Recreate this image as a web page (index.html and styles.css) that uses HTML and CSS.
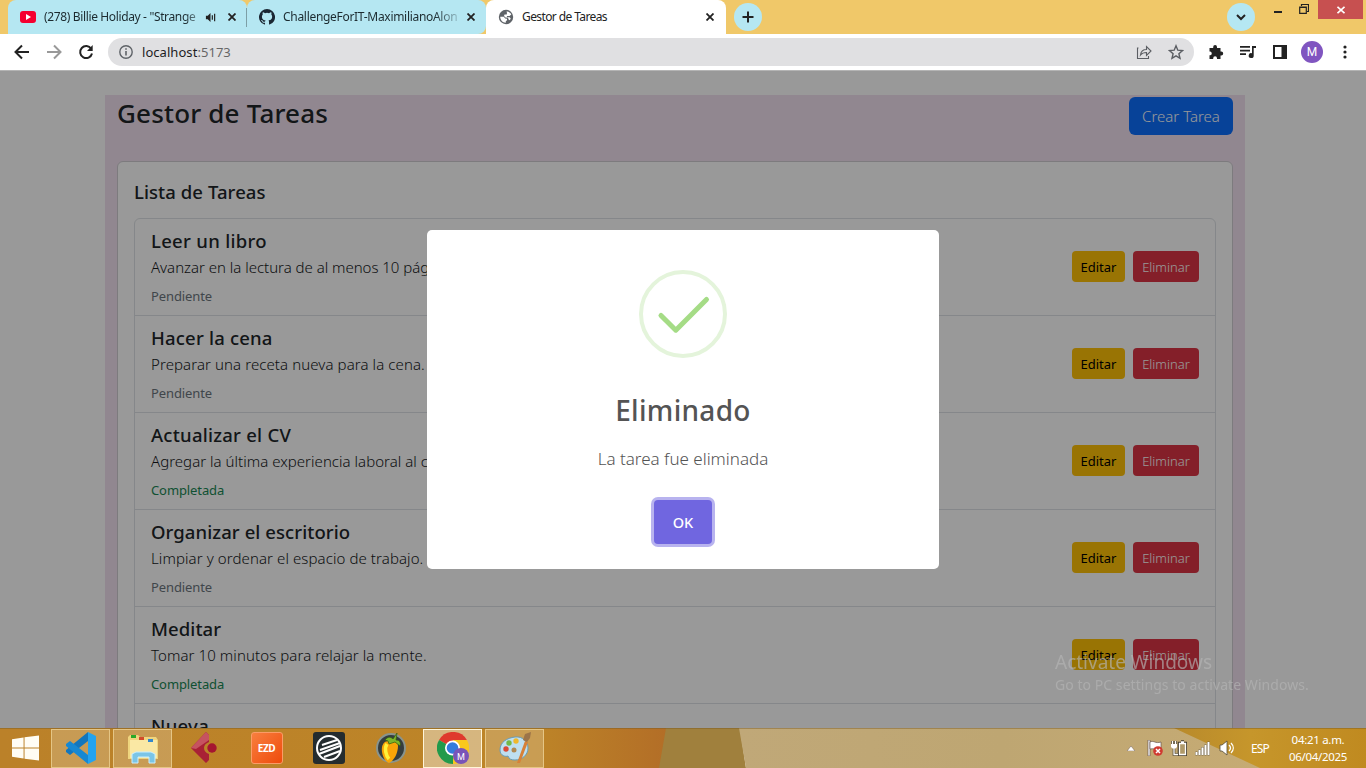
FILE: index.html
```html
<!DOCTYPE html>
<html lang="es">
<head>
<meta charset="utf-8">
<title>Gestor de Tareas</title>
<link rel="stylesheet" href="styles.css">
</head>
<body>
<div class="desktop">
  <header class="tabstrip">
    <div class="tabs">
      <div class="tab tab-first">
        <svg class="fav" viewBox="0 0 16 16"><rect y="2" width="16" height="12" rx="3" fill="#f5002f"/><path d="M6 5l5 3-5 3z" fill="#fff"/></svg>
        <span class="tab-title t1">(278) Billie Holiday - "Strange</span>
        <svg class="audio" viewBox="0 0 12 12"><path d="M1 4h2l3-3v10L3 8H1z" fill="#222"/><path d="M8 3.500v5M10.500 2v8" stroke="#222" stroke-width="1.300"/></svg>
        <svg class="x" viewBox="0 0 8 8"><path d="M.5.5l7 7m0-7l-7 7"/></svg>
      </div>
      <div class="tab tab-second">
        <svg class="fav" viewBox="0 0 16 16"><path fill="#1b2733" d="M8 0a8 8 0 0 0-2.530 15.590c.4.070.55-.17.55-.38v-1.490c-2.010.37-2.530-.49-2.690-.94-.09-.23-.48-.94-.82-1.130-.28-.15-.68-.52-.01-.53.63-.01 1.080.58 1.230.82.72 1.210 1.870.87 2.330.66.07-.52.28-.87.51-1.070-1.780-.2-3.640-.89-3.640-3.950 0-.87.31-1.590.82-2.150-.08-.2-.36-1.020.08-2.120 0 0 .67-.21 2.200.82a7.400 7.400 0 0 1 4 0c1.530-1.040 2.200-.82 2.200-.82.44 1.100.16 1.920.08 2.120.51.56.82 1.270.82 2.150 0 3.070-1.870 3.750-3.650 3.950.29.25.54.73.54 1.480v2.200c0 .21.15.46.55.38A8 8 0 0 0 8 0z"/></svg>
        <span class="tab-title t2">ChallengeForIT-MaximilianoAlon</span>
        <svg class="x" viewBox="0 0 8 8"><path d="M.5.5l7 7m0-7l-7 7"/></svg>
      </div>
      <div class="tab tab-active">
        <svg class="fav" viewBox="0 0 16 16"><circle cx="8" cy="8" r="7.200" fill="#5f6368"/><path d="M2.200 7.800h3.600l1.400 1.700 1.800.3v1.400l-1.200 1v1.500C4.500 13.700 2.300 11 2.200 7.800zM8.500 2.500c2 0 4 1.200 4.800 3L11.500 7H8.800l.4 1.200h2.300l1.200 1-.8 2-1.300-.8-.6-1.600-2.500-.4L6 7l.5-1.500h2.200L9 4z" fill="#fff"/></svg>
        <span class="tab-title t3">Gestor de Tareas</span>
        <svg class="x" viewBox="0 0 8 8"><path d="M.5.5l7 7m0-7l-7 7"/></svg>
      </div>
      <div class="round new-tab"><svg viewBox="0 0 12 12"><path d="M6 .5v11M.5 6h11"/></svg></div>
    </div>
    <div class="round tab-search"><svg viewBox="0 0 12 12"><path d="M2 4l4 4 4-4"/></svg></div>
    <svg class="min" viewBox="0 0 8 2"><path d="M0 0h8v2H0z" fill="#222"/></svg>
    <svg class="restore" viewBox="0 0 10 10"><path d="M.7 3h6.600v6.300H.7zM.2 3.300h7.600M2.500 2V.5h7v7H8" fill="none" stroke="#222" stroke-width="1.200"/></svg>
    <div class="win-close"><svg viewBox="0 0 8 8"><path d="M.5.8l7 6.400m0-6.400l-7 6.400" stroke="#fff" stroke-width="1.700"/></svg></div>
  </header>

  <div class="toolbar">
    <svg class="nav back" viewBox="0 0 16 16"><path d="M15 8H2M8 1.500L1.500 8 8 14.500"/></svg>
    <svg class="nav fwd" viewBox="0 0 16 16"><path d="M1 8h13M8 1.500L14.500 8 8 14.500"/></svg>
    <svg class="nav reload" viewBox="0 0 16 16"><path d="M13.200 4.800A6 6 0 1 0 14 9.500"/><path d="M14.700 1v6H9z" class="solid"/></svg>
    <div class="omnibox">
      <svg class="info" viewBox="0 0 14 14"><circle cx="7" cy="7" r="6.200" fill="none" stroke="#5f6368" stroke-width="1.400"/><path d="M6.200 6h1.600v4.500H6.200zM6.200 3.300h1.600v1.500H6.200z" fill="#5f6368"/></svg>
      <span class="url">localhost<span class="port">:5173</span></span>
      <svg class="share" viewBox="0 0 16 16"><path d="M2.500 4H1.500v10.500h11V12M4.500 11c.5-4 3-5.500 6-5.500V2.500L15 7l-4.500 4.500v-3c-3 0-4.500.5-6 2.500z"/></svg>
      <svg class="star" viewBox="0 0 16 16"><path d="M8 1.800l1.800 4.400 4.700.4-3.600 3.100 1.100 4.600L8 11.800l-4 2.500 1.100-4.600L1.500 6.600l4.700-.4z"/></svg>
    </div>
    <svg class="tool" viewBox="0 0 16 16"><path d="M1.500 4h3.700V3a1.900 1.900 0 0 1 3.800 0v1h3.500v3.600h.8a1.900 1.900 0 0 1 0 3.800h-.8V15H9v-.8a1.900 1.900 0 0 0-3.800 0v.8H1.500v-3.700h.8a1.900 1.900 0 0 0 0-3.700h-.8z"/></svg>
    <svg class="tool" viewBox="0 0 16 16"><path d="M0 2h10v1.700H0zM0 5.700h10v1.700H0zM0 9.300h6V11H0zM12 2h4v2h-2.300v7.500a2.500 2.500 0 1 1-1.700-2.300z"/></svg>
    <svg class="tool" viewBox="0 0 16 16"><path d="M1 1h14v14H1zM3 3v10h6.500V3z" fill-rule="evenodd"/></svg>
    <div class="avatar">M</div>
    <svg class="tool dots" viewBox="0 0 16 16"><circle cx="8" cy="3" r="1.600"/><circle cx="8" cy="8" r="1.600"/><circle cx="8" cy="13" r="1.600"/></svg>
  </div>

  <main class="viewport">
    <div class="container">
      <div class="page-head">
        <h2 class="page-title">Gestor de Tareas</h2>
        <button class="btn btn-primary">Crear Tarea</button>
      </div>
      <section class="card">
        <h5 class="card-title">Lista de Tareas</h5>
        <ul class="list">
          <li class="item"><div><h5 class="name n1">Leer un libro</h5><p class="desc d1">Avanzar en la lectura de al menos 10 páginas.</p><small class="state">Pendiente</small></div><div class="acts"><button class="btn sm warn">Editar</button><button class="btn sm danger">Eliminar</button></div></li>
          <li class="item"><div><h5 class="name n2">Hacer la cena</h5><p class="desc">Preparar una receta nueva para la cena.</p><small class="state">Pendiente</small></div><div class="acts"><button class="btn sm warn">Editar</button><button class="btn sm danger">Eliminar</button></div></li>
          <li class="item"><div><h5 class="name n3">Actualizar el CV</h5><p class="desc d3">Agregar la última experiencia laboral al currículum.</p><small class="state done">Completada</small></div><div class="acts"><button class="btn sm warn">Editar</button><button class="btn sm danger">Eliminar</button></div></li>
          <li class="item"><div><h5 class="name">Organizar el escritorio</h5><p class="desc">Limpiar y ordenar el espacio de trabajo.</p><small class="state">Pendiente</small></div><div class="acts"><button class="btn sm warn">Editar</button><button class="btn sm danger">Eliminar</button></div></li>
          <li class="item"><div><h5 class="name">Meditar</h5><p class="desc">Tomar 10 minutos para relajar la mente.</p><small class="state done">Completada</small></div><div class="acts"><button class="btn sm warn">Editar</button><button class="btn sm danger">Eliminar</button></div></li>
          <li class="item"><div><h5 class="name n1">Nueva</h5></div></li>
        </ul>
      </section>
    </div>
    <div class="backdrop">
      <div class="modal">
        <svg class="check" viewBox="0 0 88 88"><circle cx="44" cy="44" r="42" fill="none" stroke="#e4f4db" stroke-width="4"/><path d="M22 45.500L36.800 60.200 67.500 29.500" fill="none" stroke="#a5dc86" stroke-width="5" stroke-linecap="round" stroke-linejoin="round"/></svg>
        <h2 class="modal-title">Eliminado</h2>
        <p class="modal-text">La tarea fue eliminada</p>
        <button class="ok">OK</button>
      </div>
    </div>
    <div class="watermark"><div class="wm1">Activate Windows</div><div class="wm2">Go to PC settings to activate Windows.</div></div>
  </main>

  <footer class="taskbar">
    <svg class="wall" viewBox="0 0 1366 40" preserveAspectRatio="none">
      <defs>
        <linearGradient id="a"><stop offset="0" stop-color="#bb8129"/><stop offset=".8" stop-color="#bd8528"/><stop offset="1" stop-color="#b36e27"/></linearGradient>
        <linearGradient id="b"><stop offset="0" stop-color="#c0a878"/><stop offset=".5" stop-color="#bea672"/><stop offset="1" stop-color="#c6ab74"/></linearGradient>
        <linearGradient id="c"><stop offset="0" stop-color="#b88a2c"/><stop offset=".4" stop-color="#c6962b"/><stop offset="1" stop-color="#c08a20"/></linearGradient>
      </defs>
      <path d="M0 0h667l-7 40H0z" fill="url(#a)"/><path d="M666 0h74l6 40h-87z" fill="#a0803d"/><path d="M739 0h445l82 40H746z" fill="url(#b)"/><path d="M1174 0h192v40h-106z" fill="url(#c)"/>
      <path d="M0 .5h1366" stroke="#795a24" stroke-opacity=".45"/>
    </svg>
    <div class="apps">
      <div class="start"><svg viewBox="0 0 28 26" width="27" height="26"><path d="M0 4l12-2v10.500H0zM13 1.800L28 0v12.500H13zM0 13.500h12V24L0 22zM13 13.500h15V26l-15-1.800z" fill="#fffdf4"/></svg></div>
      <div class="slot open"><svg viewBox="0 0 32 32"><path d="M23 0l8 4v24l-8 4z" fill="#24a3ee"/><path d="M23 0v9L5 23l-4-3V18z" fill="#1276bd"/><path d="M1 12l4-3 18 14v9L1 14z" fill="#1688d2"/></svg></div>
      <div class="slot open"><svg viewBox="0 0 32 32"><path d="M1 5l2-2h8l2 2h16l2 3v19H1z" fill="#efd57e"/><path d="M3 8h27v18H3z" fill="#fae8a4"/><path d="M4 3h5v3H4z" fill="#29a928"/><path d="M12 5h5v3h-5z" fill="#d34b2b"/><path d="M21 7h5v3h-5z" fill="#3588cc"/><path d="M5 31V22l4-2h15l4 2v9h-6v-6H11v6z" fill="#7bc5e6" stroke="#c9efff"/></svg></div>
      <div class="slot"><svg viewBox="0 0 32 32"><path d="M17 0l3 3v7q-5 2-5 6t5 6v6l-3 3L2 16z" fill="#a92135"/><path d="M17 0L2 16l5 1L20 8V3z" fill="#c65360"/><circle cx="23" cy="16" r="4.700" fill="#a51530"/></svg></div>
      <div class="slot"><div class="ezd">EZD</div></div>
      <div class="slot"><svg viewBox="0 0 32 32"><rect width="32" height="32" rx="3" fill="#242c2f"/><circle cx="16" cy="16" r="12" fill="none" stroke="#fff" stroke-width="2"/><path d="M9 13l15-5M7 18l20-7M6 22l21-8M11 25l16-6" stroke="#fff" stroke-width="2"/></svg></div>
      <div class="slot"><svg viewBox="0 0 32 32"><circle cx="16" cy="16" r="14" fill="#343c3d" stroke="#89948d" stroke-width="2"/><path d="M14 9c5-3 9 0 9 5 0 7-4 15-9 17-5-2-8-10-7-16 1-4 3-6 7-6z" fill="#f9a407"/><path d="M12 12c-3 4-1 12 2 15" fill="none" stroke="#fff23a" stroke-width="3.500"/><path d="M10 8c3-4 6-3 8-1l4-6-1 7c4 0 5 3 4 6l-5-4-6 2-1-3z" fill="#7db52a" stroke="#315b0c" stroke-width=".7"/></svg></div>
      <div class="slot open current"><svg viewBox="0 0 32 32"><path d="M16 16L2.100 8A16 16 0 0 1 29.900 8z" fill="#df3a2d"/><path d="M16 16L2.100 8A16 16 0 0 0 16 32z" fill="#229a4b"/><path d="M16 16V32A16 16 0 0 0 29.900 8H16z" fill="#fac81d"/><circle cx="15.500" cy="16" r="7.500" fill="#fff"/><circle cx="15.500" cy="16" r="5.800" fill="#347bdc"/><circle cx="24" cy="24" r="8" fill="#7954b8"/><text x="24" y="27.500" text-anchor="middle" font-size="9" font-family="Roboto, sans-serif" fill="#fff">M</text></svg></div>
      <div class="slot open"><svg viewBox="0 0 32 32"><path d="M16 5c8-1 13 5 13 11 0 7-6 12-13 12-4 0-6-1-7-4-2 1-8 0-8-6C1 10 8 6 16 5z" fill="#bedff0" stroke="#699cb4"/><circle cx="7" cy="17" r="2.700" fill="#da4935"/><circle cx="10" cy="11" r="2.700" fill="#73b847"/><circle cx="17" cy="9" r="2.700" fill="#efb82d"/><circle cx="15" cy="18" r="2.500" fill="#b18952"/><path d="M18 31l8-22 3 1-8 21z" fill="#d78138"/><path d="M24 8l2-6 6-2-1 6-3 4z" fill="#9c7449"/></svg></div>
    </div>
    <div class="tray">
      <svg class="up" viewBox="0 0 8 5"><path d="M0 5l4-5 4 5z" fill="#fff" stroke="#544" stroke-width=".4"/></svg>
      <svg class="ti" viewBox="0 0 16 16"><path d="M1 0h2v16H1z" fill="#fff" stroke="#544" stroke-width=".6"/><path d="M3 2c4-2 5 2 11 0v7c-5 1-7-1-11 0z" fill="#fff" stroke="#544" stroke-width=".6"/><circle cx="11" cy="11" r="4.800" fill="#d03a31"/><path d="M9 9l4 4m0-4l-4 4" stroke="#fff" stroke-width="1.500"/></svg>
      <svg class="ti" viewBox="0 0 16 16"><path d="M1.500 1v3M4.500 1v3M3 8v6.500h4M8 3h7v12H8zM10 1.500h3" fill="none" stroke="#443c2c" stroke-width="2.600"/><path d="M8.500 3.500h6v11h-6z" fill="#b09a6a"/><path d="M1.500 1v3M4.500 1v3M3 8v6.500h4M8.500 3.500h6v11h-6zM10 2h3" fill="none" stroke="#fff" stroke-width="1.300"/><path d="M0 4h6v3L4.500 8.500h-3L0 7z" fill="#fff"/></svg>
      <svg class="ti" viewBox="0 0 16 16"><path d="M.5 12h2v3h-2zM3.500 10h2v5h-2zM6.500 7.500h2V15h-2zM9.500 5h2v10h-2zM12.500 2h2v13h-2z" fill="#fff" stroke="#544b3a" stroke-width=".7" paint-order="stroke"/></svg>
      <svg class="ti" viewBox="0 0 16 16"><path d="M1 5h2l5-4v14l-5-4H1z" fill="#fff" stroke="#544b3a" stroke-width=".8"/><path d="M10 5c2 2 2 4 0 6M12 3c3 3 3 7 0 10" fill="none" stroke="#fff" stroke-width="1.300"/></svg>
      <span class="lang">ESP</span>
      <div class="clock"><span>04:21 a.m.</span><span>06/04/2025</span></div>
    </div>
  </footer>
</div>
</body>
</html>
```
FILE: styles.css
```css
* { box-sizing: border-box; }
body { margin: 0; font-family: "Noto Sans", "Open Sans", sans-serif; overflow: hidden; }
svg { display: block; flex: none; }
h2, h5, p, ul { margin: 0; padding: 0; font-weight: 500; }
button { font-family: inherit; border: 0; padding: 0; }
.desktop { width: 1366px; height: 768px; display: flex; flex-direction: column; overflow: hidden; }

.tabstrip { height: 34px; flex: none; background: #f0c869; display: flex; align-items: flex-start; padding-left: 8px; }
.tabs { display: flex; flex: 1; height: 34px; }
.tab { width: 239px; height: 34px; background: #b5e7f2; display: flex; align-items: center; padding: 0 10px 0 12px; color: #1c2b30; }
.tab-first { border-radius: 8px 8px 0 0; position: relative; }
.tab-first::after { content: ""; position: absolute; right: 0; top: 8px; width: 1px; height: 19px; background: #7d9fa6; }
.tab-second { border-radius: 8px 8px 8px 0; }
.tab-active { width: 240px; background: #fff; border-radius: 8px 8px 0 0; color: #222; }
.fav { width: 16px; height: 16px; margin-right: 8px; }
.tab-title { flex: 1; font-size: 12px; white-space: nowrap; overflow: hidden; line-height: 18px; }
.t1 { letter-spacing: -0.36px; -webkit-mask-image: linear-gradient(90deg, #000 88%, transparent 104%); }
.t2 { letter-spacing: -0.3px; -webkit-mask-image: linear-gradient(90deg, #000 85%, transparent 102%); }
.t3 { letter-spacing: -0.6px; }
.audio { width: 11px; height: 11px; margin: 0 6px 0 2px; }
.x { width: 8px; height: 8px; stroke: #222; stroke-width: 1.8; margin-right: 1px; margin-left: 6px; }
.tab-active .x { margin-right: 2px; }
.round { width: 28px; height: 28px; border-radius: 50%; background: #b5e7f2; margin-top: 3px; display: grid; place-items: center; }
.round svg { width: 12px; height: 12px; fill: none; stroke: #222; stroke-width: 2; }
.new-tab { margin-left: 8px; }
.min { width: 8px; height: 2px; margin: 11px 17px 0 19px; }
.restore { width: 10px; height: 10px; margin: 4px 9px 0 0; }
.win-close { width: 45px; height: 19px; background: #c75050; display: grid; place-items: center; margin-right: 3px; }
.win-close svg { width: 8px; height: 8px; }

.toolbar { height: 37px; flex: none; background: #fff; border-bottom: 1px solid #b4b4b4; display: flex; align-items: center; padding-left: 14px; }
.nav { width: 16px; height: 16px; fill: none; stroke: #222; stroke-width: 2; margin-right: 16px; }
.fwd { stroke: #999; }
.reload { margin-right: 14px; }
.nav .solid { fill: #222; stroke: none; }
.omnibox { width: 1086px; height: 28px; border-radius: 14px; background: #e0e0e2; display: flex; align-items: center; padding: 0 10px 0 11px; margin-right: 14px; }
.info { width: 14px; height: 14px; margin-right: 9px; }
.url { flex: 1; font-size: 13px; color: #1d1d1f; letter-spacing: 0.05px; line-height: 20px; }
.port { color: #666; }
.share, .star { width: 16px; height: 16px; fill: none; stroke: #5b5e63; stroke-width: 1.4; margin-left: 16px; }
.share { stroke-width: 1.1; }
.tool { width: 16px; height: 16px; fill: #222; margin-right: 16px; }
.avatar { width: 22px; height: 22px; border-radius: 50%; background: #8055c0; color: #fff; font: 12px/22px Roboto, sans-serif; text-align: center; margin: 0 14px 0 -3px; }
.dots { margin: 0; }

.viewport { height: 657px; flex: none; position: relative; overflow: hidden; background: #fff; padding-top: 24px; }
.container { width: 1140px; height: 700px; margin-left: 105px; padding: 0 12px; background: #f2e2f0; color: #212529; }
.page-head { display: flex; justify-content: space-between; height: 66px; }
.page-title { font-size: 26px; line-height: 36px; letter-spacing: 0.18px; }
.btn { border-radius: 6px; cursor: pointer; }
.btn-primary { background: #0d6efd; color: #fff; width: 104px; height: 38px; font-size: 15px; font-weight: 300; margin-top: 2px; }
.card { background: #fff; border: 1px solid #d0cdd3; border-radius: 6px; padding: 16px; height: 640px; }
.card-title { font-size: 18.5px; line-height: 28px; margin-bottom: 12px; letter-spacing: 0.08px; }
.list { list-style: none; border: 1px solid #dee2e6; border-radius: 6px; }
.item { height: 97px; border-bottom: 1px solid #dee2e6; padding: 8px 16px; display: flex; justify-content: space-between; align-items: center; }
.item:last-child { align-items: flex-start; }
.name { font-size: 18.5px; line-height: 28px; height: 28px; white-space: nowrap; letter-spacing: 0.08px; }
.n1 { letter-spacing: 0.3px; }
.n2 { letter-spacing: 0.2px; }
.n3 { letter-spacing: 0.25px; }
.desc { font-size: 15px; font-weight: 300; line-height: 24px; height: 24px; margin-bottom: 4px; white-space: nowrap; letter-spacing: 0.09px; color: #15181b; }
.d1 { letter-spacing: -0.02px; }
.d3 { letter-spacing: 0.03px; }
.state { font-size: 13px; font-weight: 400; line-height: 26px; height: 24px; display: block; color: #6c757d; letter-spacing: -0.1px; }
.done { color: #198754; }
.acts { display: flex; gap: 8px; padding-bottom: 2px; }
.sm { height: 31px; border-radius: 4px; font-size: 13px; padding-top: 1px; }
.warn { background: #ffc107; color: #000; width: 53px; }
.danger { background: #dc3545; color: #fff; width: 66px; font-weight: 300; }

.backdrop { position: absolute; inset: 0; background: rgba(0, 0, 0, 0.4); }
.modal { position: absolute; left: 427px; top: 159px; width: 512px; height: 339px; border-radius: 5px; background: #fff; display: flex; flex-direction: column; align-items: center; padding-top: 40px; color: #545454; }
.check { width: 88px; height: 88px; }
.modal-title { font-size: 28px; line-height: 40px; margin-top: 32px; letter-spacing: 0.3px; }
.modal-text { font-size: 17px; font-weight: 300; line-height: 28px; margin-top: 15px; }
.ok { width: 58px; height: 44px; margin-top: 27px; border-radius: 4px; background: #7066e0; box-shadow: 0 0 0 3px #b8b3ef; color: #fff; font-size: 14.5px; font-weight: 500; }
.watermark { position: absolute; left: 1055px; top: 579px; color: #b6b6b6; opacity: 0.65; white-space: nowrap; }
.wm1 { font-size: 19px; line-height: 25px; }
.wm2 { font-size: 14px; line-height: 20px; letter-spacing: 0.05px; }

.taskbar { height: 40px; flex: none; position: relative; display: flex; justify-content: space-between; }
.wall { position: absolute; inset: 0; width: 1366px; height: 40px; }
.apps, .tray { position: relative; display: flex; align-items: center; height: 40px; }
.start { width: 49px; padding-left: 12px; }
.slot { width: 59px; height: 39px; margin: 0 1px 0 2px; display: grid; place-items: center; }
.slot svg { width: 32px; height: 32px; }
.open { background: rgba(230, 215, 185, 0.3); border: 1px solid rgba(245, 220, 160, 0.65); }
.current { background: rgba(230, 215, 185, 0.6); border-color: #fff5d8; }
.ezd { width: 32px; height: 32px; border: 1px solid #fb9b66; border-radius: 3px; background: linear-gradient(135deg, #f87f3e, #ef4b0c); color: #fff; font: bold 10px/30px "Open Sans", sans-serif; letter-spacing: -0.4px; text-align: center; }
.tray { padding-right: 18px; color: #fff; font-size: 12px; }
.up { width: 8px; height: 5px; margin-right: 12px; }
.ti { width: 16px; height: 16px; margin-right: 8px; }
.lang { width: 20px; margin: 0 17px 0 8px; font-size: 12px; letter-spacing: -0.9px; }
.clock { width: 60px; display: flex; flex-direction: column; align-items: center; line-height: 17px; font-size: 11.5px; letter-spacing: -0.3px; white-space: nowrap; }
```
